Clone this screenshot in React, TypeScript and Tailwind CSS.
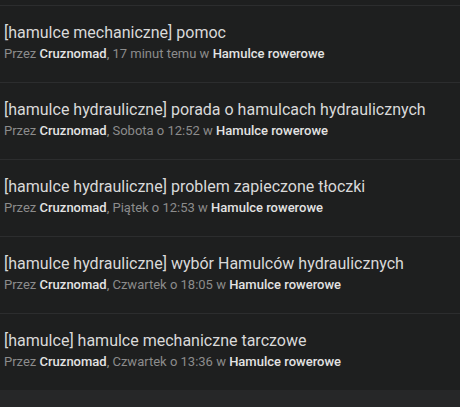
import React from 'react';

// Lista wątków z forum — ciemny motyw
type Topic = {
  prefix: string;
  title: string;
  author: string;
  when: string;
  forum: string;
};

const topics: Topic[] = [
  { prefix: 'hamulce mechaniczne', title: 'pomoc', author: 'Cruznomad', when: '17 minut temu', forum: 'Hamulce rowerowe' },
  { prefix: 'hamulce hydrauliczne', title: 'porada o hamulcach hydraulicznych', author: 'Cruznomad', when: 'Sobota o 12:52', forum: 'Hamulce rowerowe' },
  { prefix: 'hamulce hydrauliczne', title: 'problem zapieczone tłoczki', author: 'Cruznomad', when: 'Piątek o 12:53', forum: 'Hamulce rowerowe' },
  { prefix: 'hamulce hydrauliczne', title: 'wybór Hamulców hydraulicznych', author: 'Cruznomad', when: 'Czwartek o 18:05', forum: 'Hamulce rowerowe' },
  { prefix: 'hamulce', title: 'hamulce mechaniczne tarczowe', author: 'Cruznomad', when: 'Czwartek o 13:36', forum: 'Hamulce rowerowe' },
];

function TopicRow({ topic }: { topic: Topic }) {
  return (
    <div className="border-t border-[#2c2d2e] h-[77px] px-[4px] pt-[17px]">
      <div className="text-[16px] leading-[20px] text-[#d9d9d9]">
        [{topic.prefix}] {topic.title}
      </div>
      <div className="mt-[3px] text-[13px] leading-[16px] text-[#8c8c8c]">
        Przez <span className="text-[#e3e3e3] font-medium">{topic.author}</span>, {topic.when} w{' '}
        <span className="text-[#e3e3e3] font-medium">{topic.forum}</span>
      </div>
    </div>
  );
}

export default function App() {
  return (
    <div className="w-[460px] h-[407px] bg-[#262728] overflow-hidden" style={{ fontFamily: 'Roboto, "Noto Sans", sans-serif' }}>
      <div className="bg-[#1e1f1f]">
        {/* ogon poprzedniego wiersza */}
        <div className="h-[5px]" />
        {topics.map((t, i) => (
          <TopicRow key={i} topic={t} />
        ))}
      </div>
    </div>
  );
}
